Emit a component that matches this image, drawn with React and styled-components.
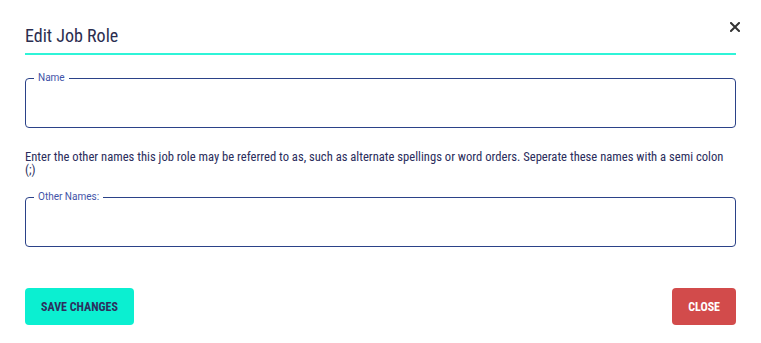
import React from 'react';
import styled, { createGlobalStyle } from 'styled-components';

const GlobalStyle = createGlobalStyle`
  body {
    margin: 0;
    background: #ffffff;
    font-family: Roboto, "Noto Sans", sans-serif;
    font-stretch: 75%;
    color: #2b2d5c;
  }
`;

const Modal = styled.div`
  padding: 0 25px;
  display: flex;
  flex-direction: column;
`;

const Header = styled.div`
  display: flex;
  justify-content: space-between;
  align-items: flex-start;
  padding-top: 24px;
  padding-bottom: 5px;
  border-bottom: 2px solid #2ff4d8;
`;

const Title = styled.h2`
  margin: 0;
  font-size: 18px;
  line-height: 24px;
  font-weight: 400;
  color: #2b2d4f;
`;

const CloseIcon = styled.button`
  border: 0;
  background: none;
  padding: 0;
  margin: -2px -4px 0 0;
  width: 10px;
  height: 10px;
  display: flex;
  cursor: pointer;
`;

const Field = styled.fieldset`
  margin: ${p => p.$top}px 0 0;
  padding: 0;
  border: 1px solid #2b4288;
  border-radius: 4px;
  min-width: 0;
`;

const Legend = styled.legend`
  margin-left: 8px;
  padding: 0 4px;
  font-size: 10px;
  font-stretch: 90%;
  line-height: 12px;
  color: #3f54a8;
`;

const Input = styled.input`
  display: block;
  width: 100%;
  box-sizing: border-box;
  height: 43px;
  border: 0;
  outline: none;
  background: transparent;
  font: inherit;
  padding: 0 12px;
`;

const Hint = styled.p`
  margin: 22px 0 0;
  font-size: 12.6px;
  line-height: 13px;
  color: #2b2d5c;
`;

const Actions = styled.div`
  display: flex;
  justify-content: space-between;
  margin-top: 41px;
`;

const Button = styled.button`
  height: 37px;
  padding: 0 ${p => p.$pad}px;
  border: 0;
  border-radius: 4px;
  font-family: inherit;
  font-stretch: 75%;
  font-size: 12px;
  font-weight: 700;
  text-transform: uppercase;
  background: ${p => (p.$danger ? '#d24b4b' : '#0befd1')};
  color: ${p => (p.$danger ? '#ffffff' : '#2d2f5e')};
  cursor: pointer;
`;

export default function App() {
  return (
    <>
      <GlobalStyle />
      <Modal>
        <Header>
          <Title>Edit Job Role</Title>
          <CloseIcon aria-label="Close">
            <svg width="10" height="10" viewBox="0 0 10 10">
              <path d="M1 1L9 9M9 1L1 9" stroke="#333" strokeWidth="2" strokeLinecap="square" />
            </svg>
          </CloseIcon>
        </Header>
        <Field $top={17}>
          <Legend>Name</Legend>
          <Input />
        </Field>
        <Hint>
          Enter the other names this job role may be referred to as, such as alternate spellings or word orders. Seperate these names with a semi colon (;)
        </Hint>
        <Field $top={15}>
          <Legend>Other Names:</Legend>
          <Input />
        </Field>
        <Actions>
          <Button $pad={16}>Save Changes</Button>
          <Button $danger $pad={16}>Close</Button>
        </Actions>
      </Modal>
    </>
  );
}
